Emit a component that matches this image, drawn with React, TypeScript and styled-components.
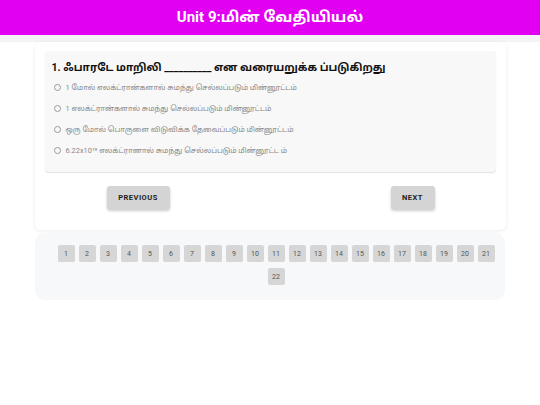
import React from "react";
import styled, { createGlobalStyle } from "styled-components";

const GlobalStyle = createGlobalStyle`
  body {
    margin: 0;
    background: #ffffff;
    font-family: Roboto, "Noto Sans", "Noto Sans Tamil", sans-serif;
  }
`;

const Header = styled.header`
  height: 35px;
  background: #e100f1;
  display: flex;
  align-items: center;
  justify-content: center;
  color: #ffffff;
  font-size: 15px;
  font-weight: 700;
`;

const Strip = styled.div`
  height: 7px;
  background: #f4f4f7;
`;

const Page = styled.main`
  display: flex;
  flex-direction: column;
  align-items: center;
  gap: 3px;
`;

const Card = styled.section`
  width: 471px;
  background: #ffffff;
  border-radius: 6px;
  box-shadow: 0 1px 4px rgba(0, 0, 0, 0.08);
  padding: 9px 10px 21px;
  box-sizing: border-box;
`;

const QuestionBox = styled.div`
  background: #f8f8f8;
  border-radius: 4px;
  box-shadow: 0 1px 1px rgba(0, 0, 0, 0.12);
  padding: 9px 8px 11px 7px;
`;

const QuestionTitle = styled.div`
  font-size: 10.6px;
  line-height: 15px;
  font-weight: 700;
  color: #111111;
  margin-bottom: 2px;
`;

const OptionList = styled.div`
  display: flex;
  flex-direction: column;
`;

const Option = styled.label`
  height: 21px;
  display: flex;
  align-items: center;
  gap: 5px;
  padding-left: 2px;
  font-size: 7.4px;
  color: #888888;
`;

const Radio = styled.span`
  width: 5px;
  height: 5px;
  border: 1px solid #9a9a9a;
  border-radius: 50%;
`;

const Actions = styled.div`
  display: flex;
  justify-content: space-between;
  padding: 14px 61px 0 62px;
`;

const NavButton = styled.button<{ $w: number }>`
  width: ${(p) => p.$w}px;
  height: 23px;
  border: none;
  border-radius: 3px;
  background: #d4d4d4;
  box-shadow: 0 2px 3px rgba(0, 0, 0, 0.2);
  font-family: Roboto, sans-serif;
  font-size: 7.5px;
  font-weight: 700;
  letter-spacing: 0.5px;
  color: #222222;
  padding: 0;
`;

const Pager = styled.nav`
  width: 470px;
  background: #f7f8fa;
  border-radius: 10px;
  padding: 12px 9px 15px 21px;
  box-sizing: border-box;
  display: flex;
  flex-wrap: wrap;
  justify-content: center;
  gap: 6px 4px;
`;

const PageBox = styled.span`
  width: 17px;
  height: 17px;
  border-radius: 2px;
  background: #d6d6d6;
  color: #555555;
  font-size: 7px;
  display: flex;
  align-items: center;
  justify-content: center;
`;

const options = [
  "1 மோல் எலக்ட்ரான்களால் சுமந்து செல்லப்படும் மின்னூட்டம்",
  "1 எலக்ட்ரான்களால் சுமந்து செல்லப்படும் மின்னூட்டம்",
  "ஒரு மோல் பொருளை விடுவிக்க தேவைப்படும் மின்னூட்டம்",
  "6.22x10¹⁹ எலக்ட்ரானால் சுமந்து செல்லப்படும் மின்னூட்ட ம்",
];

export default function App() {
  return (
    <>
      <GlobalStyle />
      <Header>Unit 9:மின் வேதியியல்</Header>
      <Strip />
      <Page>
        <Card>
          <QuestionBox>
            <QuestionTitle>
              1. ஃபாரடே மாறிலி __________ என வரையறுக்க ப்படுகிறது
            </QuestionTitle>
            <OptionList>
              {options.map((o) => (
                <Option key={o}>
                  <Radio />
                  {o}
                </Option>
              ))}
            </OptionList>
          </QuestionBox>
          <Actions>
            <NavButton $w={63}>PREVIOUS</NavButton>
            <NavButton $w={44}>NEXT</NavButton>
          </Actions>
        </Card>
        <Pager>
          {Array.from({ length: 22 }, (_, i) => (
            <PageBox key={i}>{i + 1}</PageBox>
          ))}
        </Pager>
      </Page>
    </>
  );
}
